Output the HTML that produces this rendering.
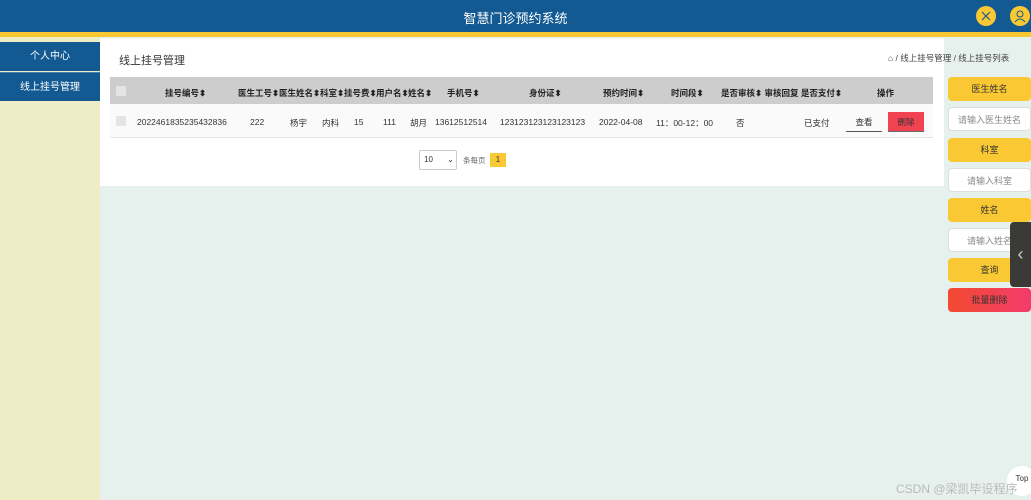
<!DOCTYPE html>
<html><head><meta charset="utf-8"><style>
*{margin:0;padding:0;box-sizing:border-box}
body{width:1031px;height:500px;overflow:hidden;background:#e6f0ec;font-family:"Liberation Sans","Noto Sans CJK SC",sans-serif;position:relative;font-size:9px;color:#333}
.hdr{position:absolute;left:0;top:0;width:1031px;height:33px;background:#135a92}
.stripe{position:absolute;left:0;top:32px;width:1031px;height:5px;background:#f9c832}
.title{position:absolute;left:0;width:100%;top:8px;text-align:center;color:#fff;font-size:13px}
.ic{position:absolute;top:6px;width:20px;height:20px;border-radius:50%;background:#f9c832}
.side{position:absolute;left:0;top:37px;width:100px;height:463px;background:#eeedc6}
.mi{position:absolute;left:0;width:100px;height:29px;background:#135a92;color:#fff;font-size:10px;line-height:29px;text-align:center}
.main{position:absolute;left:100px;top:38px;width:844px;height:148px;background:#fff}
.th{position:absolute;left:110px;top:77px;width:823px;height:27px;background:#cdcdcd}
.row{position:absolute;left:110px;top:104px;width:823px;height:34px;background:#fafafa;border-bottom:1px solid #e5e5e5}
.t{position:absolute;white-space:nowrap;font-size:8.5px}
.h{font-weight:bold;top:87px;color:#222}
.r{top:117px;color:#333}
.rp{position:absolute;left:948px;width:83px;height:24px;border-radius:4px;text-align:center;line-height:24px;font-size:9px}
.y{background:#f9c832;color:#333}
.in{background:#fff;border:1px solid #ddd;color:#888}
</style></head><body>
<div class="hdr"><div class="title">智慧门诊预约系统</div>
<div class="ic" style="left:976px"><svg width="20" height="20"><path d="M6 6l8 8M14 6l-8 8" stroke="#135a92" stroke-width="1.2"/></svg></div>
<div class="ic" style="left:1010px"><svg width="20" height="20"><circle cx="10" cy="8" r="3" fill="none" stroke="#135a92"/><path d="M5 16q5-6 10 0" fill="none" stroke="#135a92"/></svg></div>
</div>
<div class="stripe"></div>
<div class="side"></div>
<div class="mi" style="top:42px">个人中心</div>
<div class="mi" style="top:72px;border-top:1px solid #4a80b0">线上挂号管理</div>
<div class="main"></div>
<div class="t" style="left:119px;top:52px;font-size:11px;color:#333">线上挂号管理</div>
<div class="t" style="left:888px;top:52px;color:#444">⌂ / 线上挂号管理 / 线上挂号列表</div>
<div class="th"></div><div class="row"></div>
<div style="position:absolute;left:116px;top:86px;width:10px;height:10px;background:#e4e4e4"></div>
<div style="position:absolute;left:116px;top:116px;width:10px;height:10px;background:#e4e4e4"></div>
<div class="t h" style="left:165px">挂号编号⬍</div>
<div class="t h" style="left:238px">医生工号⬍</div>
<div class="t h" style="left:279px">医生姓名⬍</div>
<div class="t h" style="left:320px">科室⬍</div>
<div class="t h" style="left:344px">挂号费⬍</div>
<div class="t h" style="left:376px">用户名⬍</div>
<div class="t h" style="left:408px">姓名⬍</div>
<div class="t h" style="left:447px">手机号⬍</div>
<div class="t h" style="left:529px">身份证⬍</div>
<div class="t h" style="left:603px">预约时间⬍</div>
<div class="t h" style="left:671px">时间段⬍</div>
<div class="t h" style="left:721px">是否审核⬍ 审核回复 是否支付⬍</div>
<div class="t h" style="left:877px">操作</div>
<div class="t r" style="left:137px">2022461835235432836</div>
<div class="t r" style="left:250px">222</div>
<div class="t r" style="left:290px">杨宇</div>
<div class="t r" style="left:322px">内科</div>
<div class="t r" style="left:354px">15</div>
<div class="t r" style="left:383px">111</div>
<div class="t r" style="left:410px">胡月</div>
<div class="t r" style="left:435px">13612512514</div>
<div class="t r" style="left:500px">123123123123123123</div>
<div class="t r" style="left:599px">2022-04-08</div>
<div class="t r" style="left:656px">11：00-12：00</div>
<div class="t r" style="left:736px">否</div>
<div class="t r" style="left:804px">已支付</div>
<div class="t" style="left:846px;top:112px;width:36px;height:20px;border-bottom:1px solid #555;text-align:center;line-height:20px">查看</div>
<div class="t" style="left:888px;top:112px;width:36px;height:20px;background:#f24352;border-bottom:1px solid #666;text-align:center;line-height:20px;color:#333">删除</div>
<div style="position:absolute;left:419px;top:150px;width:38px;height:20px;border:1px solid #ccc;border-radius:2px;font-size:8px;line-height:18px;padding-left:4px">10 <span style="margin-left:12px">⌄</span></div>
<div class="t" style="left:463px;top:155px;font-size:7.5px;color:#666">条每页</div>
<div style="position:absolute;left:490px;top:153px;width:16px;height:14px;background:#f9c832;font-size:8px;text-align:center;line-height:14px;color:#333">1</div>
<div class="rp y" style="top:77px">医生姓名</div>
<div class="rp in" style="top:107px">请输入医生姓名</div>
<div class="rp y" style="top:138px">科室</div>
<div class="rp in" style="top:168px">请输入科室</div>
<div class="rp y" style="top:198px">姓名</div>
<div class="rp in" style="top:228px">请输入姓名</div>
<div class="rp y" style="top:258px">查询</div>
<div class="rp" style="top:288px;background:linear-gradient(90deg,#f34a30,#f23c6a);color:#333">批量删除</div>
<div style="position:absolute;left:1010px;top:222px;width:21px;height:65px;background:#3a3a36;border-radius:4px 0 0 4px;color:#ccc;font-size:18px;line-height:65px;text-align:center">‹</div>
<div style="position:absolute;left:1007px;top:466px;width:30px;height:30px;border-radius:50%;background:#fff;font-size:8px;text-align:center;line-height:26px">Top</div>
<div class="t" style="left:896px;top:480px;font-size:12px;color:#bbb">CSDN @梁凯毕设程序</div>
</body></html>
